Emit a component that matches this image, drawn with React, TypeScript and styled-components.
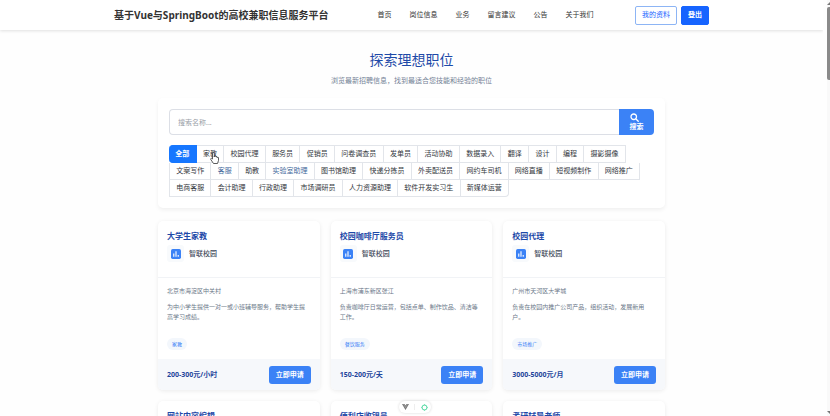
import React, { useState } from "react";
import styled, { createGlobalStyle } from "styled-components";

const GlobalStyle = createGlobalStyle`
  * { box-sizing: border-box; }
  body {
    margin: 0;
    overflow: hidden;
    background: #fefefe;
    color: #303133;
    font-family: "Noto Sans", "Noto Sans CJK SC", sans-serif;
    font-size: 7px;
    line-height: 10px;
  }
  button, input { font-family: inherit; font-size: inherit; line-height: inherit; }
  button { margin: 0; cursor: pointer; }
  h1, h2, p { margin: 0; padding: 0; }
`;

const Shell = styled.div`
  display: flex;
  height: 100vh;
  overflow: hidden;
`;

const Page = styled.div`
  flex: 1;
  min-width: 0;
`;

const Header = styled.header`
  background: #fff;
  box-shadow: 0 1px 3px rgba(0, 0, 0, 0.12);
`;

const HeaderInner = styled.div`
  display: flex;
  align-items: center;
  max-width: 595px;
  height: 30px;
  margin: 0 auto;
`;

const Brand = styled.div`
  font-size: 10px;
  font-weight: 700;
  line-height: 14px;
  white-space: nowrap;
  color: #333;
`;

const Nav = styled.nav`
  display: flex;
  gap: 18px;
  margin-left: 49px;
  white-space: nowrap;
`;

const NavLink = styled.a`
  color: #333;
  text-decoration: none;
`;

const Actions = styled.div`
  display: flex;
  gap: 4px;
  margin-left: auto;
`;

const HeaderButton = styled.button<{ $solid?: boolean }>`
  height: 19px;
  padding: 0 6px;
  border: 1px solid ${(p) => (p.$solid ? "#1664ff" : "#8db5f5")};
  border-radius: 2px;
  background: ${(p) => (p.$solid ? "#1664ff" : "#fff")};
  color: ${(p) => (p.$solid ? "#fff" : "#1664ff")};
  font-weight: ${(p) => (p.$solid ? 700 : 400)};
  white-space: nowrap;
`;

const Main = styled.main`
  max-width: 507px;
  margin: 0 auto;
`;

const Hero = styled.section`
  padding: 20px 0 12px;
  text-align: center;
`;

const HeroTitle = styled.h1`
  font-size: 14px;
  font-weight: 400;
  line-height: 20px;
  color: #1e4aa8;
`;

const HeroText = styled.p`
  margin-top: 6px;
  color: #748296;
`;

const Panel = styled.section`
  padding: 11px;
  border-radius: 5px;
  background: #fff;
  box-shadow: 0 2px 4px rgba(0, 0, 0, 0.06);
`;

const SearchForm = styled.form`
  display: flex;
`;

const SearchInput = styled.input`
  flex: 1;
  min-width: 0;
  height: 26px;
  padding: 0 8px;
  border: 1px solid #dcdfe6;
  border-right: 0;
  border-radius: 4px 0 0 4px;
  outline: 0;
  background: #fff;
  &::placeholder { color: #9a9fa8; }
`;

const SearchButton = styled.button`
  display: flex;
  flex-direction: column;
  align-items: center;
  justify-content: center;
  width: 35px;
  padding: 0;
  border: 0;
  border-radius: 0 4px 4px 0;
  background: #3b82f6;
  color: #fff;
  font-weight: 700;
`;

const SearchIcon = styled.svg`
  width: 9px;
  height: 9px;
  margin-right: 5px;
`;

const Categories = styled.div`
  margin-top: 10px;
`;

const Category = styled.button<{ $active: boolean; $tinted: boolean }>`
  position: relative;
  flex: 1 1 auto;
  height: 18px;
  padding: 0 6px;
  border: 1px solid ${(p) => (p.$active ? "#1677ff" : "#e2e5ea")};
  border-left: 0;
  border-radius: ${(p) => (p.$active ? "4px 0 0 4px" : "0")};
  background: ${(p) => (p.$active ? "#1677ff" : "#fff")};
  color: ${(p) => (p.$active ? "#fff" : p.$tinted ? "#456a9c" : "#33373d")};
  font-weight: ${(p) => (p.$active ? 700 : 400)};
  white-space: nowrap;
`;

const CategoryRow = styled.div<{ $max: number }>`
  display: flex;
  max-width: ${(p) => p.$max}px;
  &:not(:first-child) { border-left: 1px solid #e2e5ea; }
  &:not(:first-child) > ${Category} {
    height: 17px;
    border-top: 0;
  }
  &:last-child > ${Category}:last-child { border-radius: 0 0 4px 0; }
`;

const Pointer = styled.svg`
  position: absolute;
  top: 6px;
  left: 13px;
  z-index: 1;
  width: 9px;
  height: 12px;
`;

const CardGrid = styled.section`
  display: grid;
  grid-template-columns: repeat(3, 1fr);
  gap: 11px;
  margin-top: 13px;
`;

const Card = styled.article`
  display: flex;
  flex-direction: column;
  overflow: hidden;
  border-radius: 5px;
  background: #fff;
  box-shadow: 0 1px 4px rgba(0, 0, 0, 0.08);
`;

const CardHead = styled.header`
  padding: 9px 9px 15px;
  border-bottom: 1px solid #f1f3f6;
`;

const CardTitle = styled.h2`
  font-size: 8px;
  font-weight: 700;
  line-height: 12px;
  color: #1e49a8;
`;

const Company = styled.div`
  display: flex;
  align-items: center;
  gap: 5px;
  margin-top: 3px;
  font-weight: 500;
  color: #3f4a5a;
`;

const LogoBox = styled.span`
  display: flex;
  align-items: center;
  justify-content: center;
  width: 17px;
  height: 17px;
  border-radius: 3px;
  background: #f8fafc;
`;

const CardBody = styled.div`
  flex: 1;
  padding: 8px 9px 9px;
  font-size: 6px;
  color: #6b7889;
`;

const Description = styled.p`
  min-height: 20px;
  margin-top: 6px;
`;

const Tag = styled.span`
  display: inline-block;
  margin-top: 16px;
  padding: 0 5px;
  border-radius: 6px;
  background: #f3f7fc;
  color: #3b82f6;
  font-size: 5px;
  line-height: 12px;
  vertical-align: top;
`;

const CardFoot = styled.footer`
  display: flex;
  align-items: center;
  justify-content: space-between;
  height: 31px;
  padding: 0 9px;
  background: #f6f8fb;
`;

const Pay = styled.strong`
  color: #1e459c;
`;

const ApplyButton = styled.button`
  height: 18px;
  padding: 0 7px;
  border: 0;
  border-radius: 3px;
  background: #3b82f6;
  color: #fff;
  font-weight: 700;
`;

const Rail = styled.div`
  display: flex;
  flex-direction: column;
  align-items: flex-end;
  width: 7px;
  padding: 2px 0;
  background: linear-gradient(to right, #fefefe 4px, #f9f9f9 4px);
`;

const RailArrow = styled.svg`
  width: 3px;
  height: 3px;
`;

const RailThumb = styled.div`
  width: 3px;
  height: 73px;
  margin: 2px 0 auto;
  border-radius: 2px 0 0 2px;
  background: #8a8a8a;
`;

const DevTools = styled.div`
  position: fixed;
  bottom: 3px;
  left: 50%;
  display: flex;
  align-items: center;
  justify-content: space-around;
  width: 32px;
  height: 12px;
  margin-left: -16px;
  border-radius: 6px;
  background: #fff;
  box-shadow: 0 0 3px rgba(0, 0, 0, 0.16);
`;

const ToolButton = styled.button`
  display: flex;
  padding: 0;
  border: 0;
  background: none;
`;

const ToolDivider = styled.span`
  width: 1px;
  height: 6px;
  background: #eee;
`;

const navItems = ["首页", "岗位信息", "业务", "留言建议", "公告", "关于我们"];

const categoryRows = [
  { max: 457, items: ["全部", "家教", "校园代理", "服务员", "促销员", "问卷调查员", "发单员", "活动协助", "数据录入", "翻译", "设计", "编程", "摄影摄像"] },
  { max: 471, items: ["文案写作", "客服", "助教", "实验室助理", "图书馆助理", "快递分拣员", "外卖配送员", "网约车司机", "网络直播", "短视频制作", "网络推广"] },
  { max: 340, items: ["电商客服", "会计助理", "行政助理", "市场调研员", "人力资源助理", "软件开发实习生", "新媒体运营"] },
];

const tintedCategories = ["客服", "实验室助理"];

const jobs = [
  { title: "大学生家教", place: "北京市海淀区中关村", text: "为中小学生提供一对一或小班辅导服务，帮助学生提高学习成绩。", tag: "家教", pay: "200-300元/小时" },
  { title: "校园咖啡厅服务员", place: "上海市浦东新区张江", text: "负责咖啡厅日常运营，包括点单、制作饮品、清洁等工作。", tag: "餐饮服务", pay: "150-200元/天" },
  { title: "校园代理", place: "广州市天河区大学城", text: "负责在校园内推广公司产品，组织活动，发展新用户。", tag: "市场推广", pay: "3000-5000元/月" },
  { title: "网站内容编辑", place: "", text: "", tag: "", pay: "" },
  { title: "便利店收银员", place: "", text: "", tag: "", pay: "" },
  { title: "考研辅导老师", place: "", text: "", tag: "", pay: "" },
];

type Job = (typeof jobs)[number];

function JobCard({ job }: { job: Job }) {
  return (
    <Card>
      <CardHead>
        <CardTitle>{job.title}</CardTitle>
        {job.pay && (
          <Company>
            <LogoBox>
              <svg width="10" height="10" viewBox="0 0 18 18" aria-hidden="true">
                <rect width="18" height="18" rx="3" fill="#3b82f6" />
                <path d="M5 8v6M9 4v10M13 11v3" stroke="#fff" strokeWidth="2" />
              </svg>
            </LogoBox>
            智联校园
          </Company>
        )}
      </CardHead>
      {job.pay && (
        <>
          <CardBody>
            <p>{job.place}</p>
            <Description>{job.text}</Description>
            <Tag>{job.tag}</Tag>
          </CardBody>
          <CardFoot>
            <Pay>{job.pay}</Pay>
            <ApplyButton type="button">立即申请</ApplyButton>
          </CardFoot>
        </>
      )}
    </Card>
  );
}

export default function App() {
  const [active, setActive] = useState("全部");
  const [query, setQuery] = useState("");
  return (
    <>
      <GlobalStyle />
      <Shell>
        <Page>
          <Header>
            <HeaderInner>
              <Brand>基于Vue与SpringBoot的高校兼职信息服务平台</Brand>
              <Nav>
                {navItems.map((item) => (
                  <NavLink key={item} href="#">{item}</NavLink>
                ))}
              </Nav>
              <Actions>
                <HeaderButton type="button">我的资料</HeaderButton>
                <HeaderButton type="button" $solid>登出</HeaderButton>
              </Actions>
            </HeaderInner>
          </Header>
          <Main>
            <Hero>
              <HeroTitle>探索理想职位</HeroTitle>
              <HeroText>浏览最新招聘信息，找到最适合您技能和经验的职位</HeroText>
            </Hero>
            <Panel>
              <SearchForm onSubmit={(e) => e.preventDefault()}>
                <SearchInput
                  aria-label="搜索名称"
                  placeholder="搜索名称..."
                  value={query}
                  onChange={(e) => setQuery(e.target.value)}
                />
                <SearchButton type="submit">
                  <SearchIcon viewBox="0 0 18 18" fill="none" stroke="#fff" strokeWidth="2.6" strokeLinecap="round" aria-hidden="true">
                    <circle cx="7.5" cy="7.5" r="5.5" />
                    <path d="M12 12l4.5 4.5" />
                  </SearchIcon>
                  搜索
                </SearchButton>
              </SearchForm>
              <Categories>
                {categoryRows.map((row) => (
                  <CategoryRow key={row.max} $max={row.max}>
                    {row.items.map((item) => (
                      <Category
                        key={item}
                        type="button"
                        aria-pressed={item === active}
                        $active={item === active}
                        $tinted={tintedCategories.includes(item)}
                        onClick={() => setActive(item)}
                      >
                        {item}
                        {item === "家教" && (
                          <Pointer viewBox="0 0 18 24" fill="#fff" stroke="#333" strokeWidth="1.6" strokeLinejoin="round" aria-hidden="true">
                            <path d="M5 14V3a1.8 1.8 0 0 1 3.6 0v7V8.5a1.5 1.5 0 0 1 3 .5v1a1.5 1.5 0 0 1 2.8.5v1a1.3 1.3 0 0 1 2.6.5v5l-2 6H7l-5.5-8a1.5 1.5 0 0 1 2.2-2z" />
                          </Pointer>
                        )}
                      </Category>
                    ))}
                  </CategoryRow>
                ))}
              </Categories>
            </Panel>
            <CardGrid>
              {jobs.map((job) => (
                <JobCard key={job.title} job={job} />
              ))}
            </CardGrid>
          </Main>
        </Page>
        <Rail aria-hidden="true">
          <RailArrow viewBox="0 0 3 3"><path d="M0 3L3 0v3z" fill="#777" /></RailArrow>
          <RailThumb />
          <RailArrow viewBox="0 0 3 3"><path d="M0 0h3v3z" fill="#777" /></RailArrow>
        </Rail>
      </Shell>
      <DevTools>
        <ToolButton type="button" aria-label="Vue">
          <svg width="7" height="6" viewBox="0 0 14 12">
            <path d="M0 0h5l2 3 2-3h5L7 12z" fill="#777" />
            <path d="M3 0l4 7 4-7" fill="none" stroke="#bbb" strokeWidth="1" />
          </svg>
        </ToolButton>
        <ToolDivider />
        <ToolButton type="button" aria-label="Inspector">
          <svg width="7" height="7" viewBox="0 0 14 14" fill="none" stroke="#4fd8a0">
            <circle cx="7" cy="7" r="5" strokeWidth="2" />
            <path d="M7 0v3M7 11v3M0 7h3M11 7h3" strokeWidth="1" />
          </svg>
        </ToolButton>
      </DevTools>
    </>
  );
}
